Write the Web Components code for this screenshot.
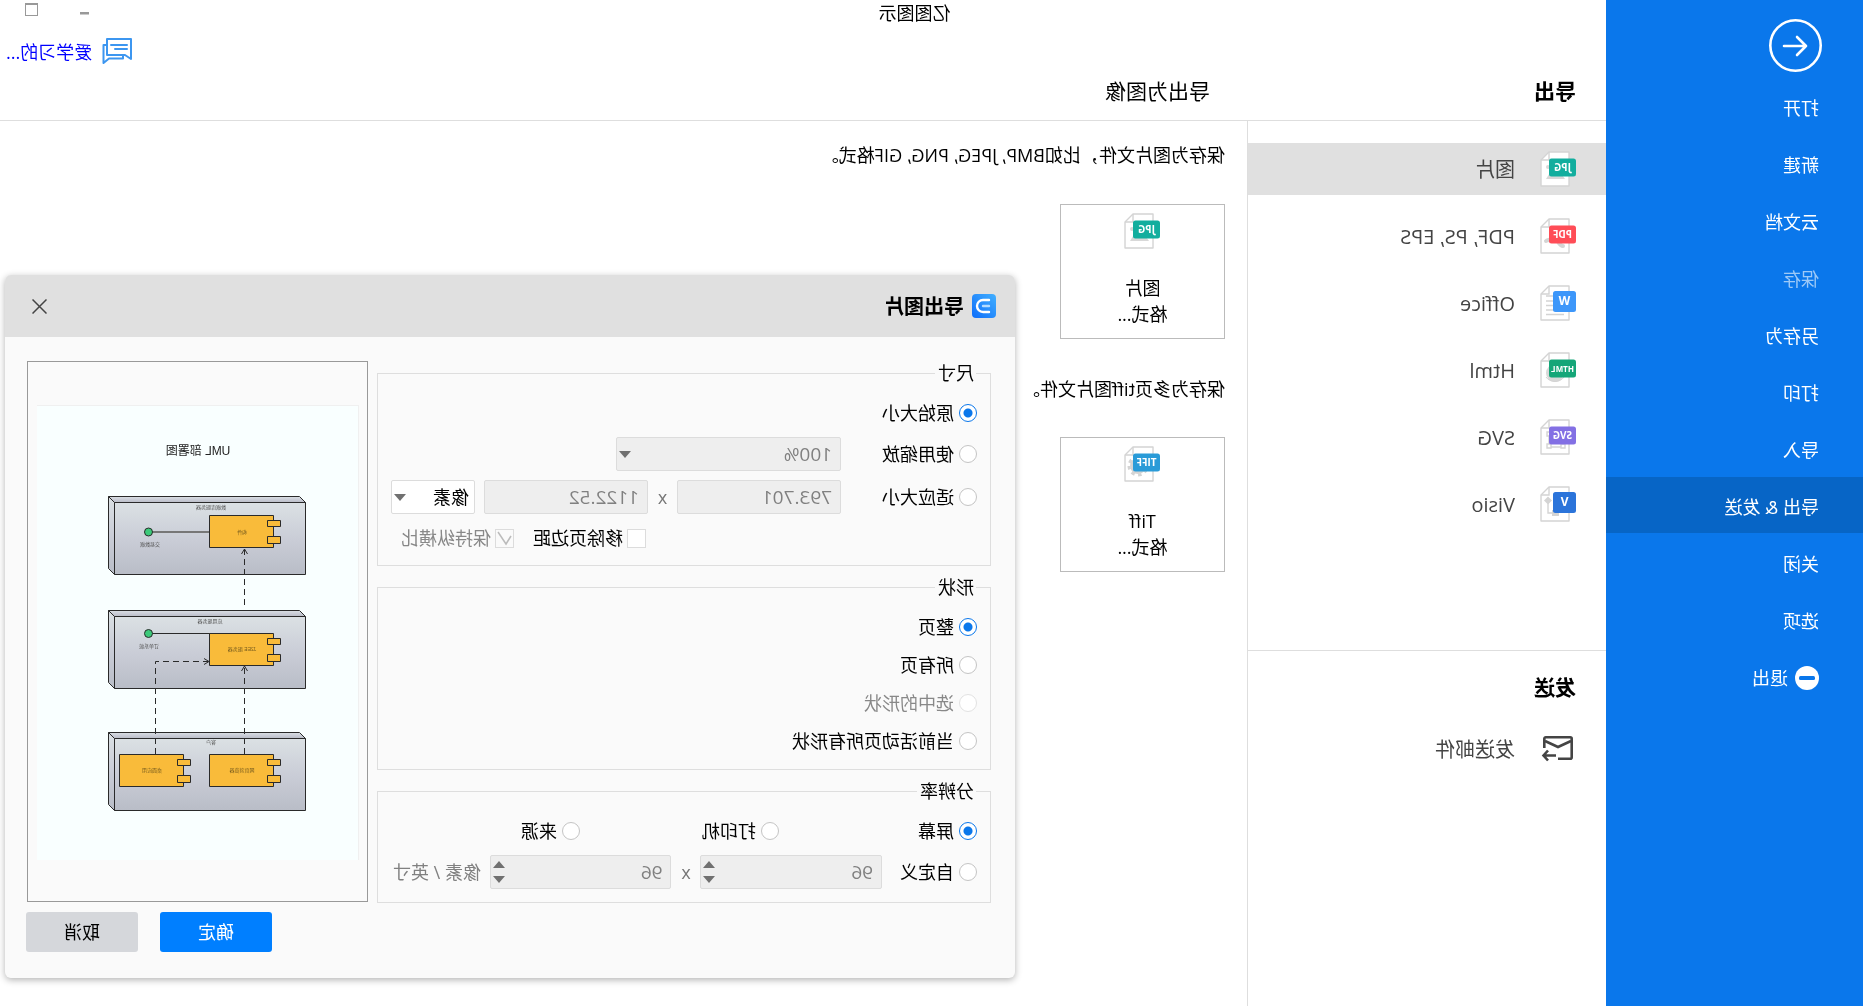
<!DOCTYPE html>
<html lang="zh-CN">
<head>
<meta charset="utf-8">
<title>亿图图示</title>
<style>
  html, body { margin: 0; height: 100%; }
  body {
    background: #fff;
    color: #000;
    font: 18px/24px "Open Sans", "Noto Sans CJK SC", sans-serif;
    font-weight: 400;
    font-variant-ligatures: none;
    font-kerning: none;
    overflow: hidden;
  }
</style>
</head>
<body>
<ed-app></ed-app>

<template id="t-app">
  <style>
    /* The whole window is drawn flipped, as in a mirrored display. */
    :host { display: flex; position: relative; min-height: 100vh; transform: scaleX(-1); }
    main { flex: 1; min-width: 0; display: flex; flex-direction: column; }
    header { padding: 27px 0 13px; border-bottom: 1px solid #dedede; }
    .account { display: flex; align-items: center; justify-content: flex-end; gap: 10px; height: 49px; padding-right: 6px; }
    .account a { color: #00f; text-decoration: none; }
    .account svg { display: block; }
    .heads { display: grid; grid-template-columns: 359px 1fr; height: 31px; align-items: center; }
    h1, h2 { margin: 0; font-size: 21px; line-height: 31px; }
    h1 { padding-left: 30px; font-weight: 700; }
    h2 { padding-left: 37px; font-weight: inherit; }
    .body { flex: 1; display: grid; grid-template-columns: 359px 1fr; }
    nav { padding-top: 22px; border-right: 1px solid #dedede; }
    .list { display: flex; flex-direction: column; gap: 15px; }
    .send { margin-top: 120px; border-top: 1px solid #dedede; padding-top: 21px; display: flex; flex-direction: column; gap: 20px; }
    section { padding: 22px; }
    p { margin: 0 0 37px; }
    ed-card + p { margin-top: 38px; margin-bottom: 36px; }
    export-dialog { position: absolute; right: 5px; top: 275px; }
  </style>
  <ed-sidebar></ed-sidebar>
  <main>
    <header>
      <div class="account">
        <svg width="30" height="27" viewBox="0 0 30 27" fill="none" stroke="#3c96f0" stroke-width="2" stroke-linejoin="round" stroke-linecap="round"><path d="M1 1h24v16H9.500l-.5 0L1 21z" stroke="none"/><path d="M1 1h24v16H7l-6 4z"/><path d="M9 17v3.500h14l5.500 4.500V7H26"/><path d="M5 7h16M5 11h12"/></svg>
        <a href="#account">爱学习的...</a>
      </div>
      <div class="heads"><h1>导出</h1><h2>导出为图像</h2></div>
    </header>
    <div class="body">
      <nav>
        <div class="list">
          <nav-item kind="jpg" selected>图片</nav-item>
          <nav-item kind="pdf">PDF, PS, EPS</nav-item>
          <nav-item kind="office">Office</nav-item>
          <nav-item kind="html">Html</nav-item>
          <nav-item kind="svg">SVG</nav-item>
          <nav-item kind="visio">Visio</nav-item>
        </div>
        <div class="send">
          <h1>发送</h1>
          <nav-item kind="mail">发送邮件</nav-item>
        </div>
      </nav>
      <section>
        <p>保存为图片文件，比如BMP, JPEG, PNG, GIF格式。</p>
        <ed-card kind="jpg">图片<br>格式...</ed-card>
        <p>保存为多页tiff图片文件。</p>
        <ed-card kind="tiff">Tiff<br>格式...</ed-card>
      </section>
    </div>
  </main>
  <title-bar></title-bar>
  <export-dialog></export-dialog>
</template>

<template id="t-title">
  <style>
    :host { position: absolute; inset: 0 0 auto 0; height: 26px; padding-left: 34px; display: grid; grid-template-columns: 1fr auto 1fr; align-items: center; pointer-events: none; }
    .name { grid-column: 2; }
    .win { justify-self: end; align-self: start; display: flex; gap: 42px; padding: 3px 25px 0 0; pointer-events: auto; }
    button { display: block; border: 0; padding: 0; background: none; }
    svg { display: block; }
  </style>
  <span class="name">亿图图示</span>
  <div class="win">
    <button aria-label="最小化"><svg width="9" height="13"><path d="M0 9h9v2H0z" fill="#999"/><path d="M0 11h9v1H0z" fill="#ccc"/></svg></button>
    <button aria-label="最大化"><svg width="13" height="13"><rect x=".5" y=".5" width="12" height="12" fill="none" stroke="#999"/><path d="M0 1.500h13" stroke="#999"/></svg></button>
  </div>
</template>

<template id="t-sidebar">
  <style>
    :host { flex: none; width: 257px; background: #0a77eb; color: #fff; padding-top: 19px; box-sizing: border-box; }
    .back { display: block; margin: 0 0 6px 41px; padding: 0; border: 0; background: none; width: 53px; height: 53px; }
    ul { list-style: none; margin: 0; padding: 0; display: flex; flex-direction: column; gap: 1px; }
    a { display: flex; align-items: center; gap: 7px; height: 56px; box-sizing: border-box; padding: 4px 0 0 44px; color: inherit; text-decoration: none; }
    .on { background: #0765c6; }
    .off { color: #9dc9f7; }
    svg { display: block; }
  </style>
  <button class="back" aria-label="返回"><svg width="53" height="53" fill="none" stroke="#fff" stroke-linecap="round" stroke-linejoin="round"><circle cx="26.500" cy="26.500" r="25.200" stroke-width="2.600"/><path d="M38 27H16M25 18l-9 9 9 9" stroke-width="2.600"/></svg></button>
  <ul>
    <li><a href="#open">打开</a></li>
    <li><a href="#new">新建</a></li>
    <li><a href="#cloud">云文档</a></li>
    <li><a href="#save" class="off">保存</a></li>
    <li><a href="#saveas">另存为</a></li>
    <li><a href="#print">打印</a></li>
    <li><a href="#import">导入</a></li>
    <li><a href="#export" class="on">导出 &amp; 发送</a></li>
    <li><a href="#close">关闭</a></li>
    <li><a href="#options">选项</a></li>
    <li><a href="#exit"><svg width="24" height="24"><circle cx="12" cy="12" r="12" fill="#fff"/><rect x="4" y="10" width="16" height="4" rx="1.500" fill="#0a77eb"/></svg>退出</a></li>
  </ul>
</template>

<template id="t-nav">
  <style>
    :host { display: block; color: #444; font-size: 20px; }
    :host([selected]) { background: #e0e0e0; }
    a { display: flex; align-items: center; gap: 25px; height: 52px; padding-left: 30px; color: inherit; text-decoration: none; }
    span { padding-top: 1px; }
  </style>
  <a href="#format"><file-icon></file-icon><span><slot></slot></span></a>
</template>

<template id="t-card">
  <style>
    :host { display: block; width: 165px; }
    button { width: 100%; height: 135px; box-sizing: border-box; border: 1px solid #bbb; background: #fff; padding: 8px 0 0; font: inherit; font-kerning: inherit; font-variant-ligatures: inherit; line-height: 26px; color: inherit; display: flex; flex-direction: column; align-items: center; gap: 26px; }
  </style>
  <button><file-icon></file-icon><span><slot></slot></span></button>
</template>

<template id="t-group">
  <style>
    :host { display: block; }
    fieldset { margin: 0; border: 1px solid #dedede; padding: 16px 13px 0; min-width: 0; }
    legend { margin-left: 1px; padding: 0 3px 0 2px; height: 24px; }
  </style>
  <fieldset><legend></legend><slot></slot></fieldset>
</template>

<template id="t-option">
  <style>
    :host { display: block; }
    label { display: flex; align-items: center; gap: 5px; height: 24px; white-space: nowrap; }
    input { appearance: none; margin: 0; box-sizing: border-box; width: 18px; height: 18px; border: 1px solid #c4c4c4; border-radius: 50%; background: #fff; }
    input:checked { border-color: #0a77eb; background: radial-gradient(circle, #0a77eb 4px, #fff 5px); }
    input[type=checkbox] { width: 19px; height: 19px; border-radius: 0; border-color: #dcdcdc; }
    .tick { display: none; }
    :host([check]) label { gap: 4px; }
    :host([check]) .box { display: grid; }
    :host([check]) .box > * { grid-area: 1 / 1; }
    :host([check][on]) .tick { display: block; pointer-events: none; }
    :host([check]) input:checked { background: #fafafa; border-color: #dcdcdc; }
    :host([off]) { color: #888; }
    :host([off]) input { border-color: #e2e2e2; }
    .box { display: block; line-height: 0; }
  </style>
  <label><span class="box"><input><svg class="tick" width="19" height="19" fill="none" stroke="#bbb" stroke-width="1.500"><path d="M3 7l5 8 8-12"/></svg></span><slot></slot></label>
</template>

<template id="t-field">
  <style>
    :host { display: block; }
    .wrap { display: grid; grid-template-columns: 1fr auto; height: 34px; box-sizing: border-box; border: 1px solid #dcdcdc; border-radius: 2px; background: #eee; align-items: center; }
    input, select { grid-area: 1 / 1 / 2 / 3; width: 100%; min-width: 0; height: 32px; box-sizing: border-box; appearance: none; border: 0; margin: 0; padding: 0 8px; background: none; font: inherit; font-size: 19px; color: #808080; opacity: 1; }
    input::-webkit-inner-spin-button { display: none; }
    :host([white]) .wrap { background: #fff; }
    :host([white]) select { color: #000; font-size: 18px; padding-left: 5px; }
    svg { grid-area: 1 / 2; margin-right: 2px; display: block; fill: #707070; pointer-events: none; }
  </style>
  <div class="wrap"></div>
</template>

<template id="t-dialog">
  <style>
    :host { display: block; width: 1010px; background: #fafafa; border-radius: 6px; box-shadow: 0 2px 7px rgba(0,0,0,.3); }
    header { display: flex; align-items: center; height: 62px; padding: 0 27px 0 19px; background: #e0e0e0; border-radius: 6px 6px 0 0; }
    h2 { margin: 0 auto 0 8px; font-size: 20px; line-height: 28px; font-weight: 700; padding-top: 2px; }
    header button { border: 0; background: none; padding: 0; }
    svg { display: block; }
    .cols { display: grid; grid-template-columns: 1fr 341px; gap: 9px; padding: 24px 22px 0 24px; }
    form { display: flex; flex-direction: column; gap: 9px; }
    .row { display: flex; align-items: center; }
    .a { margin-top: 12px; }
    .b { margin-top: 9px; }
    .lead { flex: none; width: 136px; }
    .lead.short { width: 95px; }
    .x { flex: none; width: 29px; text-align: center; color: #777; }
    .grow { flex: 1; }
    .zoom { width: 225px; }
    .unit { width: 84px; margin-left: 9px; }
    .checks { justify-content: flex-end; gap: 19px; padding: 0 10px 15px 0; }
    .stack { display: flex; flex-direction: column; gap: 14px; padding-bottom: 16px; }
    .thirds { display: grid; grid-template-columns: 198px 199px 1fr; }
    .per { margin-left: 9px; width: 90px; color: #808080; white-space: nowrap; }
    .last { padding-bottom: 13px; }
    footer { display: flex; justify-content: flex-end; gap: 22px; padding: 9px 21px 26px; }
    footer button { width: 112px; height: 40px; border: 0; border-radius: 3px; font: inherit; background: #d5d7db; color: #000; }
    footer .ok { background: #007fff; color: #fff; }
  </style>
  <header>
    <svg width="24" height="24"><defs><linearGradient id="lg" x1="0" y1="0" x2="1" y2="1"><stop offset="0" stop-color="#43b0ff"/><stop offset="1" stop-color="#0d6dfa"/></linearGradient></defs><rect width="24" height="24" rx="4" fill="url(#lg)"/><path d="M7 6h6a6 6 0 0 1 0 12H7" fill="none" stroke="#fff" stroke-width="2.400" stroke-linecap="round"/><path d="M7 12h6" stroke="#b4dcff" stroke-width="2.400" stroke-linecap="round"/></svg>
    <h2>导出图片</h2>
    <button aria-label="关闭"><svg width="15" height="15" stroke="#444" stroke-width="1.500"><path d="M.5 .5l14 14M14.500 .5l-14 14"/></svg></button>
  </header>
  <div class="cols">
    <form>
      <ed-group name="尺寸">
        <ed-option on>原始大小</ed-option>
        <div class="row a"><ed-option class="lead">使用缩放</ed-option><ed-field class="zoom" type="select" value="100%" label="缩放" off></ed-field></div>
        <div class="row b"><ed-option class="lead">适应大小</ed-option><ed-field class="grow" value="793.701" label="宽度" off></ed-field><span class="x">x</span><ed-field class="grow" value="1122.52" label="高度" off></ed-field><ed-field class="unit" type="select" value="像素" label="单位" white></ed-field></div>
        <div class="row a checks"><ed-option check>移除页边距</ed-option><ed-option check on off>保持纵横比</ed-option></div>
      </ed-group>
      <ed-group name="形状">
        <div class="stack">
          <ed-option on>整页</ed-option><ed-option>所有页</ed-option><ed-option off>选中的形状</ed-option><ed-option>当前活动页所有形状</ed-option>
        </div>
      </ed-group>
      <ed-group name="分辨率">
        <div class="thirds"><ed-option on>屏幕</ed-option><ed-option>打印机</ed-option><ed-option>来源</ed-option></div>
        <div class="row a last"><ed-option class="lead short">自定义</ed-option><ed-field class="grow" type="spin" value="96" label="水平" off></ed-field><span class="x">x</span><ed-field class="grow" type="spin" value="96" label="垂直" off></ed-field><span class="per">像素 / 英寸</span></div>
      </ed-group>
    </form>
    <page-preview></page-preview>
  </div>
  <footer><button class="ok">确定</button><button>取消</button></footer>
</template>

<template id="t-preview">
  <style>
    :host { display: flex; align-items: center; padding: 2px 0 0 8px; border: 1px solid #999; box-sizing: border-box; height: 541px; }
    svg { display: block; background: #f9ffff; }
    text { font-family: "Liberation Sans", "Noto Sans CJK SC", sans-serif; font-weight: 400; font-size: 5px; text-anchor: middle; fill: #555; }
    .t { font-size: 12px; fill: #222; }
    .s { stroke: #2a2a2a; stroke-width: 1; }
    .d { stroke-dasharray: 6 4; fill: none; }
    .n { fill: none; }
    .o { fill: #f9bb3a; }
    .g { fill: #3cca7a; }
    .o text { fill: #775c1e; }
  </style>
  <svg width="322" height="455" viewBox="0 0 322 455">
    <defs>
      <linearGradient id="f" x1="0" y1="0" x2="0" y2="1"><stop offset="0" stop-color="#dbe1e4"/><stop offset=".5" stop-color="#cacdd7"/><stop offset="1" stop-color="#b9bdc7"/></linearGradient>
      <g id="box"><path class="s" fill="url(#f)" d="M.5 6.500l6-6h191l-6 6z"/><path class="s" fill="url(#f)" d="M197.500 .5v72l-6 6v-72z"/><path class="s" fill="url(#f)" d="M.5 6.500h191v72H.5z"/></g>
      <g id="comp"><path class="s o" d="M7.500 .5h64v32h-64z"/><path class="s o" d="M.5 5.500h13v6H.5zM.5 21.500h13v7H.5z"/></g>
    </defs>
    <path d="M0 .5h322M.5 0v455" stroke="#f0f0f0"/>
    <text class="t" x="161" y="50">UML 部署图</text>
    <use href="#box" x="53" y="91"/><use href="#box" x="53" y="205"/><use href="#box" x="53" y="327"/>
    <path class="n" d="M149 127h58" stroke="#777" stroke-width="2"/>
    <path class="s n" d="M149 228.500h58"/>
    <circle class="s g" cx="210.500" cy="127" r="4"/><circle class="s g" cx="210.500" cy="228.500" r="4"/>
    <use href="#comp" x="78" y="110"/><use href="#comp" x="78" y="228"/><use href="#comp" x="78" y="349"/><use href="#comp" x="168" y="349"/>
    <path class="s d" d="M114.500 200v-56M114.500 349v-88M203.500 349v-92.500H151"/>
    <path class="s n" d="M111.500 149l3-5 3 5M111.500 266l3-5 3 5M155 253.500l-5 3 5 3"/>
    <text x="148" y="104">数据库服务器</text><text x="149" y="218">应用服务器</text><text x="148" y="339">客户</text>
    <text x="209" y="141">交易数据</text><text x="210" y="243">订单系统</text>
    <g class="o"><text x="117" y="129">构件</text><text x="117" y="246">J2EE 服务器</text><text x="117" y="367">网页浏览器</text><text x="207" y="367">桌面应用</text></g>
  </svg>
</template>

<script>
const grab = id => document.getElementById(id).content.cloneNode(true);
class Base extends HTMLElement {
  constructor() { super(); this.attachShadow({ mode: 'open' }); }
  connectedCallback() {
    if (this.shadowRoot.childNodes.length) return;
    this.shadowRoot.append(grab(this.constructor.tpl));
    this.ready();
  }
  ready() {}
  $(q) { return this.shadowRoot.querySelector(q); }
}

const DOC = '<path d="M7 1h20l8 8v26H7z" fill="#fff" stroke="#d4d4d4" stroke-width="1.400" stroke-linejoin="round"/><path d="M27 1v8h8" fill="none" stroke="#d4d4d4" stroke-width="1.400"/>';
const badge = (c, t, size) => `<rect x="0" y="7.500" width="27" height="18" rx="2.500" fill="${c}"/><text x="13.500" y="20" font-size="${size}">${t}</text>`;
const square = (c, t) => `<rect x="0" y="6" width="23" height="21" rx="2.500" fill="${c}"/><text x="11.500" y="20" font-size="12">${t}</text>`;
const ICONS = {
  jpg: DOC + '<path d="M11 28l7-10 4 5 3-3 5 8z" fill="#d8d8d8"/><circle cx="28" cy="16" r="2" fill="#d8d8d8"/>' + badge('#12ae9e', 'JPG', 10),
  tiff: DOC + '<circle cx="22" cy="20" r="6" fill="none" stroke="#d4d4d4" stroke-width="4"/><circle cx="22" cy="20" r="9" fill="none" stroke="#d4d4d4" stroke-width="3" stroke-dasharray="3.500 3.570"/>' + badge('#2a9bd8', 'TIFF', 10),
  pdf: DOC + '<path d="M13 28c3 0 4-3 6-6s6-1 11 1" fill="none" stroke="#d4d4d4" stroke-width="4" stroke-linecap="round"/>' + badge('#ff4d57', 'PDF', 10),
  office: DOC + '<path d="M12 11h18M12 16h18M12 20.500h18M12 25h18M12 29.500h18" stroke="#d4d4d4" stroke-width="1.400"/>' + square('#3d97fa', 'W'),
  html: DOC + '<circle cx="21" cy="21" r="9" fill="#d8d8d8"/><path d="M12 25c4 6 14 6 18 0" fill="none" stroke="#d4d4d4"/>' + badge('#15a678', 'HTML', 8),
  svg: DOC + '<g fill="#fff" stroke="#d4d4d4" stroke-width="1.400"><path d="M13 15h14v13H13z"/><path d="M11 25h4v4h-4zM25 25h4v4h-4zM25 13h4v4h-4z"/></g>' + badge('#8370e4', 'SVG', 10),
  visio: DOC + '<path d="M28 10.500l4 4-4 4-4-4zM17 24h7v6h-7z" fill="#d4d4d4"/><path d="M28 17v10h-6" fill="none" stroke="#d4d4d4" stroke-width="1.400"/>' + square('#2b74da', 'V'),
  mail: '<g fill="none" stroke="#444" stroke-width="2.600"><path d="M18 27.700H5.800a1.500 1.500 0 0 1-1.500-1.500V7.800a1.500 1.500 0 0 1 1.500-1.500h24.400a1.500 1.500 0 0 1 1.500 1.500V17"/><path d="M5 10l13 6 13-6"/><path d="M20 24.500h11M28 19.500l4.500 5-4.500 5"/></g>'
};
class FileIcon extends HTMLElement {
  constructor() { super(); this.attachShadow({ mode: 'open' }); }
  set kind(k) {
    this.shadowRoot.innerHTML = `<style>:host{display:block;flex:none}svg{display:block}text{font-family:"Open Sans",sans-serif;font-weight:700;text-anchor:middle;fill:#fff}</style><svg width="36" height="36" viewBox="0 0 36 36">${ICONS[k]}</svg>`;
  }
}
customElements.define('file-icon', FileIcon);

const define = (name, tpl, ready = () => {}) => customElements.define(name, class extends Base {
  static tpl = tpl;
  ready() { ready.call(this); }
});

const setIcon = function () { this.$('file-icon').kind = this.getAttribute('kind'); };
define('nav-item', 't-nav', setIcon);
define('ed-card', 't-card', setIcon);
define('ed-sidebar', 't-sidebar');
define('title-bar', 't-title');
define('page-preview', 't-preview');

define('ed-option', 't-option', function () {
  const input = this.$('input');
  input.type = this.hasAttribute('check') ? 'checkbox' : 'radio';
  input.checked = this.hasAttribute('on');
  input.disabled = this.hasAttribute('off');
  input.addEventListener('change', () => {
    this.toggleAttribute('on', input.checked);
    if (input.type === 'checkbox') return;
    for (const other of this.closest('ed-group').querySelectorAll('ed-option:not([check])'))
      if (other !== this) { other.removeAttribute('on'); other.shadowRoot.querySelector('input').checked = false; }
  });
});

const DOWN = '<svg width="12" height="7"><path d="M0 0h12L6 7z"/></svg>';
const SPIN = '<svg width="12" height="22"><path d="M0 7h12L6 0zM0 15h12l-6 7z"/></svg>';
define('ed-field', 't-field', function () {
  const type = this.getAttribute('type'), value = this.getAttribute('value');
  const attrs = `aria-label="${this.getAttribute('label')}" ${this.hasAttribute('off') ? 'disabled' : ''}`;
  this.$('.wrap').innerHTML = type === 'select'
    ? `<select ${attrs}><option>${value}</option></select>${DOWN}`
    : `<input ${attrs} type="${type === 'spin' ? 'number' : 'text'}" value="${value}">${type === 'spin' ? SPIN : ''}`;
});
define('ed-group', 't-group', function () { this.$('legend').textContent = this.getAttribute('name'); });
define('export-dialog', 't-dialog');
define('ed-app', 't-app');
</script>
</body>
</html>
